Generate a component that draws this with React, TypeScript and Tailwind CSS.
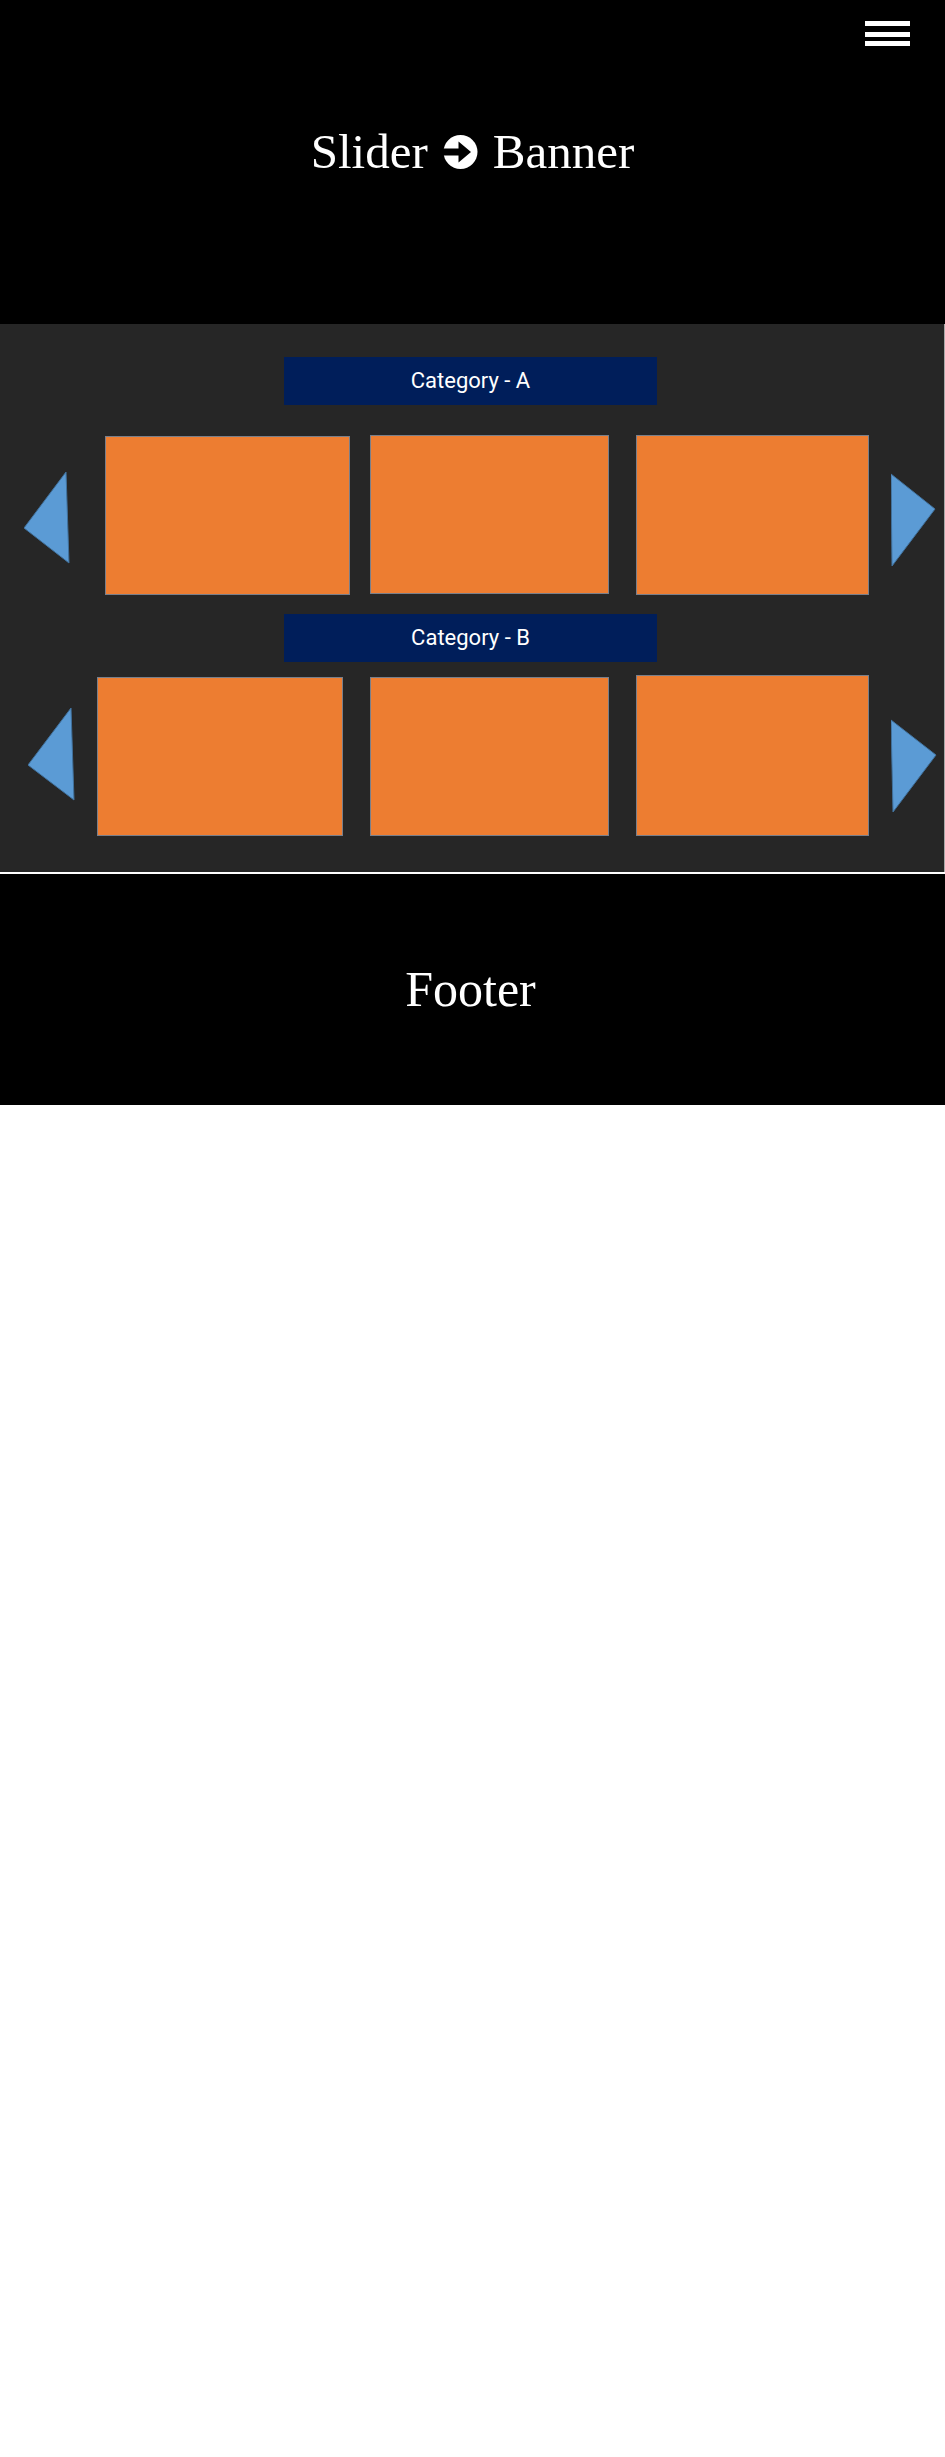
import React from "react";

const serif = { fontFamily: '"Liberation Serif", "Times New Roman", serif' };

function ArrowCircle() {
  return (
    <svg width="37" height="34" viewBox="0 0 37 34" className="shrink-0">
      <circle cx="18.5" cy="17" r="17" fill="#ffffff" />
      <rect x="0" y="13.5" width="19" height="7" fill="#000000" />
      <polygon points="16.5,6.5 29,17 16.5,27.5" fill="#000000" />
    </svg>
  );
}

function Tri({ w, h, pts }: { w: number; h: number; pts: string }) {
  return (
    <svg width={w} height={h} viewBox={`0 0 ${w} ${h}`} className="shrink-0 block">
      <polygon points={pts} fill="#5b9bd5" stroke="#41719c" strokeWidth="1" strokeLinejoin="round" />
    </svg>
  );
}

function Box({ cls }: { cls: string }) {
  return <div className={`shrink-0 bg-[#ed7d31] border border-[#7a7f8a] ${cls}`} />;
}

function Label({ text }: { text: string }) {
  return (
    <div
      className="ml-[284px] w-[373px] h-[48px] bg-[#001e5a] flex items-center justify-center text-white text-[22px] leading-[48px]"
      style={{ fontFamily: 'Roboto, "Liberation Sans", sans-serif' }}
    >
      {text}
    </div>
  );
}

export default function App() {
  return (
    <div className="w-[945px] bg-white">
      {/* Header / slider banner */}
      <div className="h-[324px] bg-black flex flex-col">
        <div className="flex justify-end pt-[21px] pr-[35px]">
          <div className="w-[45px] flex flex-col">
            <div className="h-[5px] bg-white" />
            <div className="h-[5px] bg-white mt-[6px]" />
            <div className="h-[5px] bg-white mt-[4px]" />
          </div>
        </div>
        <div className="mt-[82px] flex items-center justify-center h-[48px] text-white text-[49px] leading-[48px]" style={serif}>
          <span>Slider</span>
          <span className="mx-[14px] flex items-center">
            <ArrowCircle />
          </span>
          <span>Banner</span>
        </div>
      </div>

      {/* Categories */}
      <div className="h-[548px] bg-[#262626] border-r border-white/60 pt-[33px]">
        <Label text="Category - A" />
        <div className="mt-[30px] flex items-start">
          <div className="ml-[24px]">
            <Tri w={46} h={160} pts="0,93 42,37 45,128" />
          </div>
          <Box cls="ml-[35px] mt-[1px] w-[245px] h-[159px]" />
          <Box cls="ml-[20px] w-[239px] h-[159px]" />
          <Box cls="ml-[27px] w-[233px] h-[160px]" />
          <div className="ml-[22px]">
            <Tri w={46} h={160} pts="0,39 1,131 44,74" />
          </div>
        </div>

        <div className="mt-[19px]">
          <Label text="Category - B" />
        </div>
        <div className="mt-[13px] flex items-start">
          <div className="ml-[28px]">
            <Tri w={47} h={161} pts="0,90 43,33 46,125" />
          </div>
          <Box cls="ml-[22px] mt-[2px] w-[246px] h-[159px]" />
          <Box cls="ml-[27px] mt-[2px] w-[239px] h-[159px]" />
          <Box cls="ml-[27px] w-[233px] h-[161px]" />
          <div className="ml-[22px]">
            <Tri w={47} h={161} pts="0,45 2,137 45,80" />
          </div>
        </div>
      </div>

      <div className="h-[2px] bg-white" />

      {/* Footer */}
      <div className="h-[231px] bg-black pt-[90px] pr-[4px] text-center text-white text-[50px] leading-[50px]" style={serif}>
        Footer
      </div>
    </div>
  );
}
